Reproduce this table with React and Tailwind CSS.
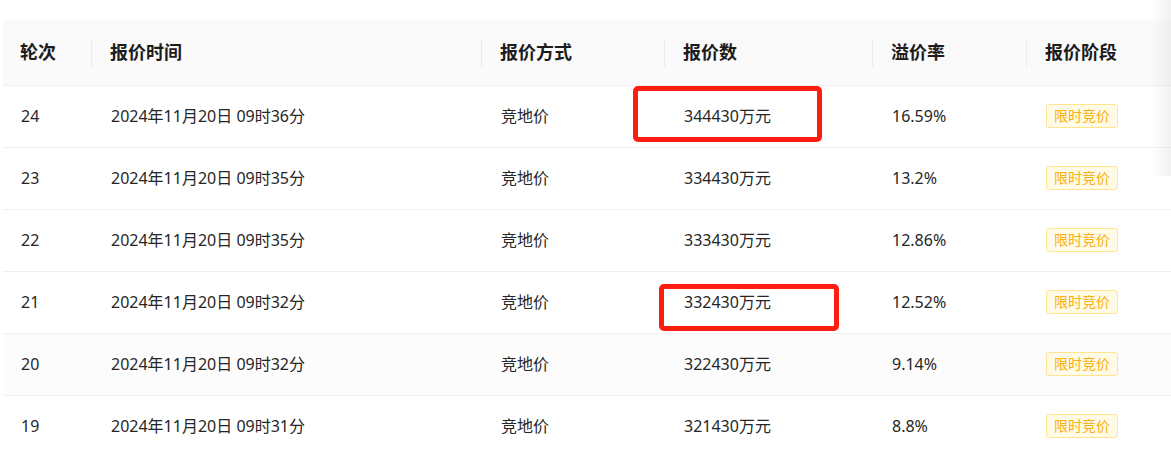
import React from "react";

const rows = [
  ["24", "2024年11月20日 09时36分", "竞地价", "344430万元", "16.59%"],
  ["23", "2024年11月20日 09时35分", "竞地价", "334430万元", "13.2%"],
  ["22", "2024年11月20日 09时35分", "竞地价", "333430万元", "12.86%"],
  ["21", "2024年11月20日 09时32分", "竞地价", "332430万元", "12.52%"],
  ["20", "2024年11月20日 09时32分", "竞地价", "322430万元", "9.14%"],
  ["19", "2024年11月20日 09时31分", "竞地价", "321430万元", "8.8%"],
];

const heads = ["轮次", "报价时间", "报价方式", "报价数", "溢价率", "报价阶段"];

const font = { fontFamily: '"Noto Sans", "Noto Sans CJK SC", sans-serif' };

export default function App() {
  return (
    <div className="relative w-[1171px] h-[456px] overflow-hidden bg-white" style={font}>
      <div className="pt-[20px] pl-[3px]">
        <div className="grid grid-cols-[90px_390px_183px_208px_154px_1fr] h-[66px] bg-[#fafafa] border-b border-[#f0f0f0] text-[18px] font-bold text-[#1c1c1c]">
          {heads.map((h, i) => (
            <div key={i} className="relative flex items-center pl-[17px]">
              {h}
              {i < 5 && (
                <span className="absolute right-[1px] top-1/2 -translate-y-1/2 w-px h-[29px] bg-[#ececec]" />
              )}
            </div>
          ))}
        </div>
        {rows.map((r, idx) => (
          <div
            key={idx}
            className={
              "grid grid-cols-[90px_390px_183px_208px_154px_1fr] h-[62px] border-b border-[#f0f0f0] text-[16px] text-[#262626] " +
              (idx === 4 ? "bg-[#fcfcfc]" : "bg-white")
            }
          >
            {r.map((c, i) => (
              <div key={i} className="flex items-center pl-[18px] pb-[1px]">
                {c}
              </div>
            ))}
            <div className="flex items-center pl-[18px] pb-[1px]">
              <span className="inline-flex items-center h-[24px] px-[7px] text-[14px] leading-[22px] text-[#faad14] bg-[#fffbe6] border border-[#ffe58f] rounded-[3px]">
                限时竞价
              </span>
            </div>
          </div>
        ))}
      </div>

      <div className="absolute left-[633px] top-[86px] w-[189px] h-[56px] border-[5px] border-[#ff1d12] rounded-[5px]" />
      <div className="absolute left-[659px] top-[284px] w-[180px] h-[47px] border-[5px] border-[#ff1d12] rounded-[5px]" />

      <div className="absolute right-0 top-0 w-[20px] h-[176px] bg-gradient-to-r from-transparent to-[rgba(0,0,0,0.05)]" />
    </div>
  );
}
